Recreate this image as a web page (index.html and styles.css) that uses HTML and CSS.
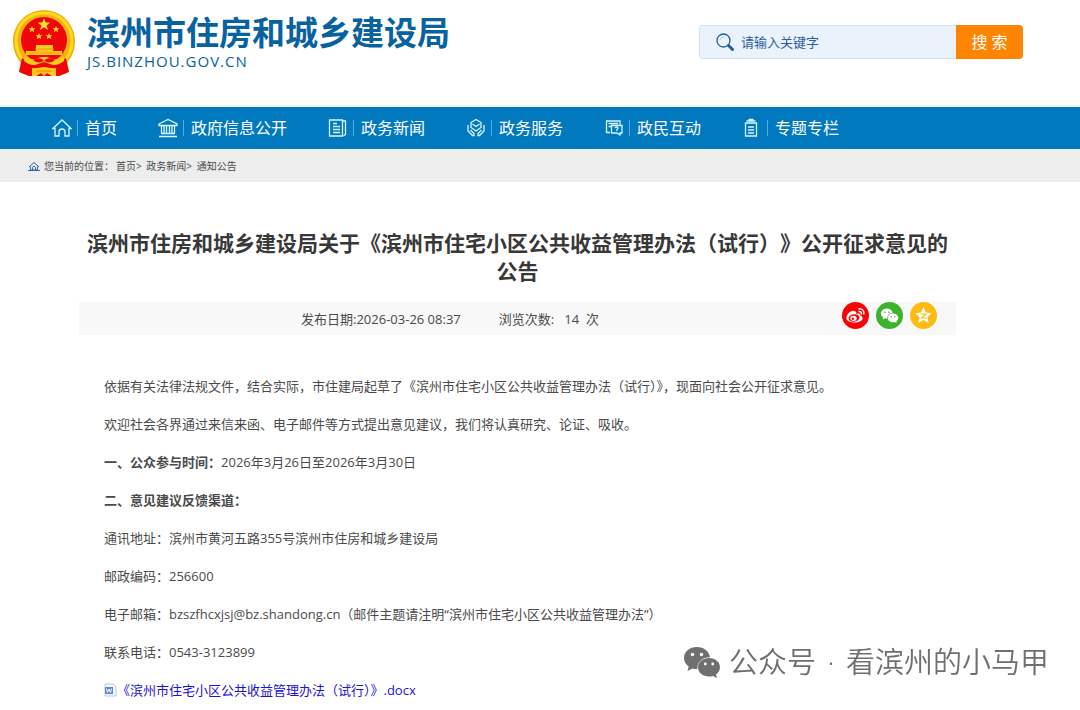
FILE: index.html
```
<!DOCTYPE html>
<html lang="zh-CN">
<head>
<meta charset="utf-8">
<title>滨州市住房和城乡建设局</title>
<link rel="stylesheet" href="styles.css">
</head>
<body>
<header class="header">
  <a class="brand" href="#">
    <svg class="emblem" viewBox="0 0 62 67" aria-hidden="true">
      <path d="M31 0C14 0 0 14 0 31c0 9 3 16 8 22l-2 9 10 4h30l10-4-2-9c5-6 8-13 8-22C62 14 48 0 31 0z" fill="#f2b010"/>
      <path d="M31 3C15 3 3 15 3 31c0 9 4 17 9 21" fill="none" stroke="#ffd91f" stroke-width="3"/>
      <path d="M31 3c16 0 28 12 28 28 0 9-4 17-9 21" fill="none" stroke="#ffd91f" stroke-width="3"/>
      <circle cx="31" cy="30" r="23" fill="#f00509"/>
      <path d="M31 8l1.600 4.500h4.800l-3.800 2.900 1.400 4.600-4-2.700-4 2.700 1.400-4.600-3.800-2.900h4.800z" fill="#ffe02a"/>
      <path id="s" d="M19 16l.9 2.300h2.500l-1.900 1.500.7 2.500-2.200-1.500-2.200 1.500.7-2.500-1.900-1.500h2.500z" fill="#ffd92a"/>
      <use href="#s" x="24"/><use href="#s" x="7" y="7"/><use href="#s" x="17" y="7"/>
      <path d="M23 35h17v6h9v4H13v-4h10z" fill="#ffc91c"/>
      <path d="M22 39h19M14 43h34" stroke="#f59b10"/>
      <path d="M9 48c7 5 14 1 17-1h10c3 2 10 6 17 1l3 14-10 4H16L6 62z" fill="#f00509"/>
      <path d="M11 46c6 5 12 3 17 1h6c5 2 11 4 17-1v5c-5 4-10 5-14 3l-6-2-6 2c-4 2-9 1-14-3z" fill="#ffcb1b"/>
      <path d="M20 50c3-2 6-2 9-1l2 2 2-2c3-1 6-1 9 1-3 3-7 3-11 1-4 2-8 2-11-1z" fill="#f00509"/>
      <path d="M19 58c5 1 8-1 12-1s7 2 12 1v8h-4l-5-3-3 3-3-3-5 3h-4z" fill="#ffcb1b"/>
      <path d="M23 61h16" stroke="#f37a10"/>
    </svg>
    <span class="brand-text">
      <span class="brand-name">滨州市住房和城乡建设局</span>
      <span class="brand-domain">JS.BINZHOU.GOV.CN</span>
    </span>
  </a>
  <form class="search" role="search">
    <label class="search-field">
      <svg class="search-icon" viewBox="0 0 18 18" fill="none" stroke="#245b9c" aria-hidden="true">
        <circle cx="7.500" cy="7.500" r="6.500" stroke-width="1.300"/>
        <path d="M4 7c0-2 2-3.500 4-3" stroke="#9fc3e6"/>
        <path d="M12.500 12.500l4 4" stroke-width="3" stroke-linecap="round"/>
      </svg>
      <input class="search-input" type="text" placeholder="请输入关键字" aria-label="请输入关键字">
    </label>
    <button class="search-button" type="submit">搜 索</button>
  </form>
</header>

<nav class="nav">
  <a class="nav-item" href="#">
    <svg class="nav-icon" viewBox="0 0 20 20" aria-hidden="true"><path d="M1 10.500L10 2l9 8.500h-2V18h-4v-4c0-4-6-4-6 0v4H3v-7.500z"/></svg>
    <span class="nav-label">首页</span>
  </a>
  <a class="nav-item" href="#">
    <svg class="nav-icon" viewBox="0 0 20 20" aria-hidden="true"><path d="M1 6l9-4.500L19 6v1.500H1zM3 15.500h14M1 18.500h18M3.500 8v7M6 8v7M8.500 8v7M11.500 8v7M14 8v7M16.500 8v7"/></svg>
    <span class="nav-label">政府信息公开</span>
  </a>
  <a class="nav-item" href="#">
    <svg class="nav-icon" viewBox="0 0 20 20" aria-hidden="true"><path d="M1.500 2h13v16h-13zM14.500 3h3v13.500l-2 1.500M5 5.500h4M5 8.500h7M5 11.500h7M5 14.500h7"/></svg>
    <span class="nav-label">政务新闻</span>
  </a>
  <a class="nav-item" href="#">
    <svg class="nav-icon" viewBox="0 0 20 20" aria-hidden="true"><path d="M10 1.500l5 3v5l-5 3.500-5-3.500v-5zM6.500 6L10 8.500 13.500 6M2 7v6l4.500 4.500H8v-2L4.500 12M18 7v6l-4.500 4.500H12v-2l3.500-3.500"/></svg>
    <span class="nav-label">政务服务</span>
  </a>
  <a class="nav-item" href="#">
    <svg class="nav-icon" viewBox="0 0 20 20" aria-hidden="true"><path d="M6 14.500H2.500V3H16v4M4.500 5.500H14M4.500 8.500H7M7.500 7.500H18V15h-2v2l-3-2H7.500zM11 9.800c1-1 3-.8 3 .4 0 .8-1.200.8-1.200 1.800v1"/></svg>
    <span class="nav-label">政民互动</span>
  </a>
  <a class="nav-item" href="#">
    <svg class="nav-icon" viewBox="0 0 20 20" aria-hidden="true"><path d="M3.500 5h11v13h-11zM4.500 3h9M6.500 1.500h5M6 9h6M6 12h6M6 15h6"/></svg>
    <span class="nav-label">专题专栏</span>
  </a>
</nav>

<div class="crumbs">
  <svg class="crumb-icon" viewBox="0 0 12 10" fill="none" stroke="#3566a5" aria-hidden="true"><path d="M1 6l5-4.500L11 6M2.500 5.500V9h7V5.500M4.500 9V6.500c0-1.500 3-1.500 3 0V9M0 9.500h12"/></svg>
  <span>您当前的位置：<a href="#">首页</a>&gt; <a href="#">政务新闻</a>&gt; <a href="#">通知公告</a></span>
</div>

<main class="article">
  <h1 class="title">滨州市住房和城乡建设局关于《滨州市住宅小区公共收益管理办法（试行）》公开征求意见的公告</h1>
  <div class="meta">
    <div class="meta-info">
      <span>发布日期:2026-03-26 08:37</span>
      <span>浏览次数:&nbsp; &nbsp;14 &nbsp;次</span>
    </div>
    <div class="share">
      <a class="share-link" href="#" aria-label="微博">
        <svg viewBox="0 0 27 27"><circle cx="13.500" cy="13.500" r="13.500" fill="#f90406"/><path d="M12 9c-3-1-8 4-7.500 7.500.6 5 15 5.500 16 .2.300-2-1-2.700-2.200-3 .6-2-1-3-4-1.700.5-1.800-.3-2.700-2.300-3z" fill="#fff"/><ellipse cx="12" cy="16" rx="5.500" ry="3.700" fill="#f90406" transform="rotate(-8 12 16)"/><ellipse cx="11.500" cy="16.300" rx="3.200" ry="2.600" fill="#fff"/><circle cx="10.800" cy="16.800" r="1.200" fill="#f90406"/><path d="M16.500 9.500c2-.4 3.500 1 3 3M16.500 6.800c3.500-.6 6.300 2.200 5.300 5.700" fill="none" stroke="#fff" stroke-width="1.400"/></svg>
      </a>
      <a class="share-link" href="#" aria-label="微信">
        <svg viewBox="0 0 27 27"><circle cx="13.500" cy="13.500" r="13.500" fill="#3bb42b"/><path d="M11 6.500c-3.500 0-6 2.200-6 5 0 1.700.9 3 2.200 3.900L6.500 17.500l2.500-1.200c.8.200 1.500.3 2.200.3 0-4 2.800-5.600 5.600-5.600-.6-2.700-2.900-4.500-5.800-4.500z" fill="#fff"/><path d="M17 11.500c-3 0-5.300 2-5.300 4.500S14 20.300 17 20.300c.6 0 1.200-.1 1.800-.3l2 1-.5-1.700c1.200-.8 2-2 2-3.300 0-2.500-2.300-4.500-5.300-4.500z" fill="#fff"/><g fill="#3bb42b"><circle cx="9" cy="10.300" r=".8"/><circle cx="13" cy="10.300" r=".8"/><circle cx="15.300" cy="14.700" r=".7"/><circle cx="18.700" cy="14.700" r=".7"/></g></svg>
      </a>
      <a class="share-link" href="#" aria-label="QQ空间">
        <svg viewBox="0 0 27 27"><circle cx="13.500" cy="13.500" r="13.500" fill="#fdbb11"/><path d="M13.500 5l2.500 5.500 5.700.7-4.200 4 1.200 5.800-5.200-3-5.200 3 1.200-5.800-4.200-4 5.700-.7z" fill="#fff"/><path d="M10.500 12h5.500L11.500 16h5.500" fill="none" stroke="#fdbb11" stroke-width="1.100"/></svg>
      </a>
    </div>
  </div>
  <div class="content">
    <p>依据有关法律法规文件，结合实际，市住建局起草了《滨州市住宅小区公共收益管理办法（试行）》，现面向社会公开征求意见。</p>
    <p>欢迎社会各界通过来信来函、电子邮件等方式提出意见建议，我们将认真研究、论证、吸收。</p>
    <p><strong>一、公众参与时间：</strong>2026年3月26日至2026年3月30日</p>
    <p><strong>二、意见建议反馈渠道：</strong></p>
    <p>通讯地址：滨州市黄河五路355号滨州市住房和城乡建设局</p>
    <p>邮政编码：256600</p>
    <p>电子邮箱：bzszfhcxjsj@bz.shandong.cn（邮件主题请注明“滨州市住宅小区公共收益管理办法”）</p>
    <p>联系电话：0543-3123899</p>
    <p class="attachment">
      <svg class="doc-icon" viewBox="0 0 13 14" aria-hidden="true"><path d="M1 1h8l3 3v9H1z" fill="#f5f9ff" stroke="#b9cae3"/><path d="M1 4h8v7H1z" fill="#5b88c8"/><path d="M2.500 5.500l1 4L5 6l1.500 3.500 1-4" fill="none" stroke="#fff"/></svg>
      <a href="#">《滨州市住宅小区公共收益管理办法（试行）》.docx</a>
    </p>
  </div>
</main>

<div class="watermark">
  <svg class="watermark-icon" viewBox="0 0 38 32" aria-hidden="true">
    <path d="M14 1C6.500 1 1 5.700 1 12c0 3.500 1.800 6.400 4.700 8.400L4.500 25l5-2.600c1.500.4 3 .6 4.800.6C14 15.500 20 11 27 11.200 26 5 20.500 1 14 1z" fill="#6f6f6f"/>
    <path d="M26 12c-6.200 0-11 4-11 9.300s4.800 9.200 11 9.200c1.400 0 2.700-.2 4-.6l4 2-1-3.400c2.500-1.700 4-4.300 4-7.200C37 16 32.200 12 26 12z" fill="#6f6f6f"/>
    <g fill="#fff"><circle cx="9.500" cy="8.500" r="1.700"/><circle cx="18.500" cy="8.500" r="1.700"/><circle cx="22.300" cy="18" r="1.400"/><circle cx="29.700" cy="18" r="1.400"/></g>
  </svg>
  <span>公众号 <span class="watermark-dot">·</span> 看滨州的小马甲</span>
</div>
</body>
</html>
```

FILE: styles.css
```
* {
  box-sizing: border-box;
}

body {
  margin: 0;
  background: #fff;
  color: #4a4a4a;
  font-family: "Open Sans", "Noto Sans CJK SC", sans-serif;
  font-size: 13px;
}

a {
  color: inherit;
  text-decoration: none;
}

svg {
  display: block;
  flex: none;
}

.header {
  display: flex;
  justify-content: space-between;
  align-items: flex-start;
  min-height: 107px;
  padding: 10px 57px 0 13px;
}

.brand {
  display: flex;
  gap: 12px;
  color: #08629f;
}

.emblem {
  width: 62px;
  height: 67px;
}

.brand-text {
  display: flex;
  flex-direction: column;
  padding-top: 4px;
}

.brand-name {
  font-size: 33px;
  font-weight: 700;
  line-height: 38px;
}

.brand-domain {
  font-size: 15px;
  line-height: 18px;
  letter-spacing: 1px;
}

.search {
  display: flex;
  flex: 0 1 324px;
  height: 34px;
  margin-top: 15px;
}

.search-field {
  display: flex;
  flex: 1;
  align-items: center;
  gap: 7px;
  min-width: 0;
  padding-left: 16px;
  background: #eaf3fc;
  border: 1px solid #d0e1f2;
  border-right: 0;
  border-radius: 4px 0 0 4px;
}

.search-icon {
  width: 18px;
  height: 18px;
}

.search-input {
  flex: 1;
  min-width: 0;
  padding: 0;
  border: 0;
  outline: 0;
  background: transparent;
  color: #2c5c9e;
  font: inherit;
}

.search-input::placeholder {
  color: #2c5c9e;
}

.search-button {
  width: 67px;
  padding: 0;
  border: 0;
  border-radius: 0 4px 4px 0;
  background: #ff8400;
  color: #fff;
  font-family: inherit;
  font-size: 16px;
  line-height: 32px;
}

.nav {
  display: flex;
  align-items: center;
  gap: 41px;
  height: 42px;
  padding-left: 52px;
  background: #0079be;
  color: #fff;
}

.nav-item {
  display: flex;
  align-items: center;
  gap: 5px;
  font-size: 16px;
  line-height: 24px;
}

.nav-icon {
  width: 20px;
  height: 20px;
  fill: none;
  stroke: #d9f6ff;
  stroke-width: 1.300;
}

.nav-label {
  display: flex;
  align-items: center;
  gap: 7px;
}

.nav-label::before {
  content: "";
  width: 1px;
  height: 16px;
  background: #4fb0e0;
}

.crumbs {
  display: flex;
  align-items: center;
  gap: 4px;
  height: 33px;
  padding-left: 28px;
  background: #ededed;
  font-size: 10px;
}

.crumbs a {
  margin-left: 2px;
}

.crumb-icon {
  width: 12px;
  height: 10px;
}

.article {
  padding: 47px 124px 0 79px;
}

.title {
  margin: 0 0 17px;
  color: #383838;
  font-size: 21px;
  font-weight: 700;
  line-height: 28px;
  text-align: center;
  text-spacing-trim: space-all;
}

.meta {
  display: flex;
  align-items: center;
  justify-content: space-between;
  height: 33px;
  padding: 0 19px 0 222px;
  background: #f8f8f8;
}

.meta-info {
  display: flex;
  gap: 38px;
}

.share {
  display: flex;
  gap: 7px;
  padding-bottom: 6px;
}

.share-link svg {
  width: 27px;
  height: 27px;
}

.content {
  padding: 32px 0 0 25px;
  line-height: 38px;
}

.content p {
  margin: 0;
}

.content .attachment {
  display: flex;
  align-items: center;
  color: #1a12d8;
}

.doc-icon {
  width: 13px;
  height: 14px;
}

.watermark {
  position: fixed;
  right: 31px;
  bottom: 28px;
  display: flex;
  align-items: center;
  gap: 8px;
  color: #6f6f6f;
  font-size: 29px;
  font-weight: 350;
  line-height: 40px;
}

.watermark-dot {
  margin: 0 4px;
}

.watermark-icon {
  width: 38px;
  height: 32px;
}
```
